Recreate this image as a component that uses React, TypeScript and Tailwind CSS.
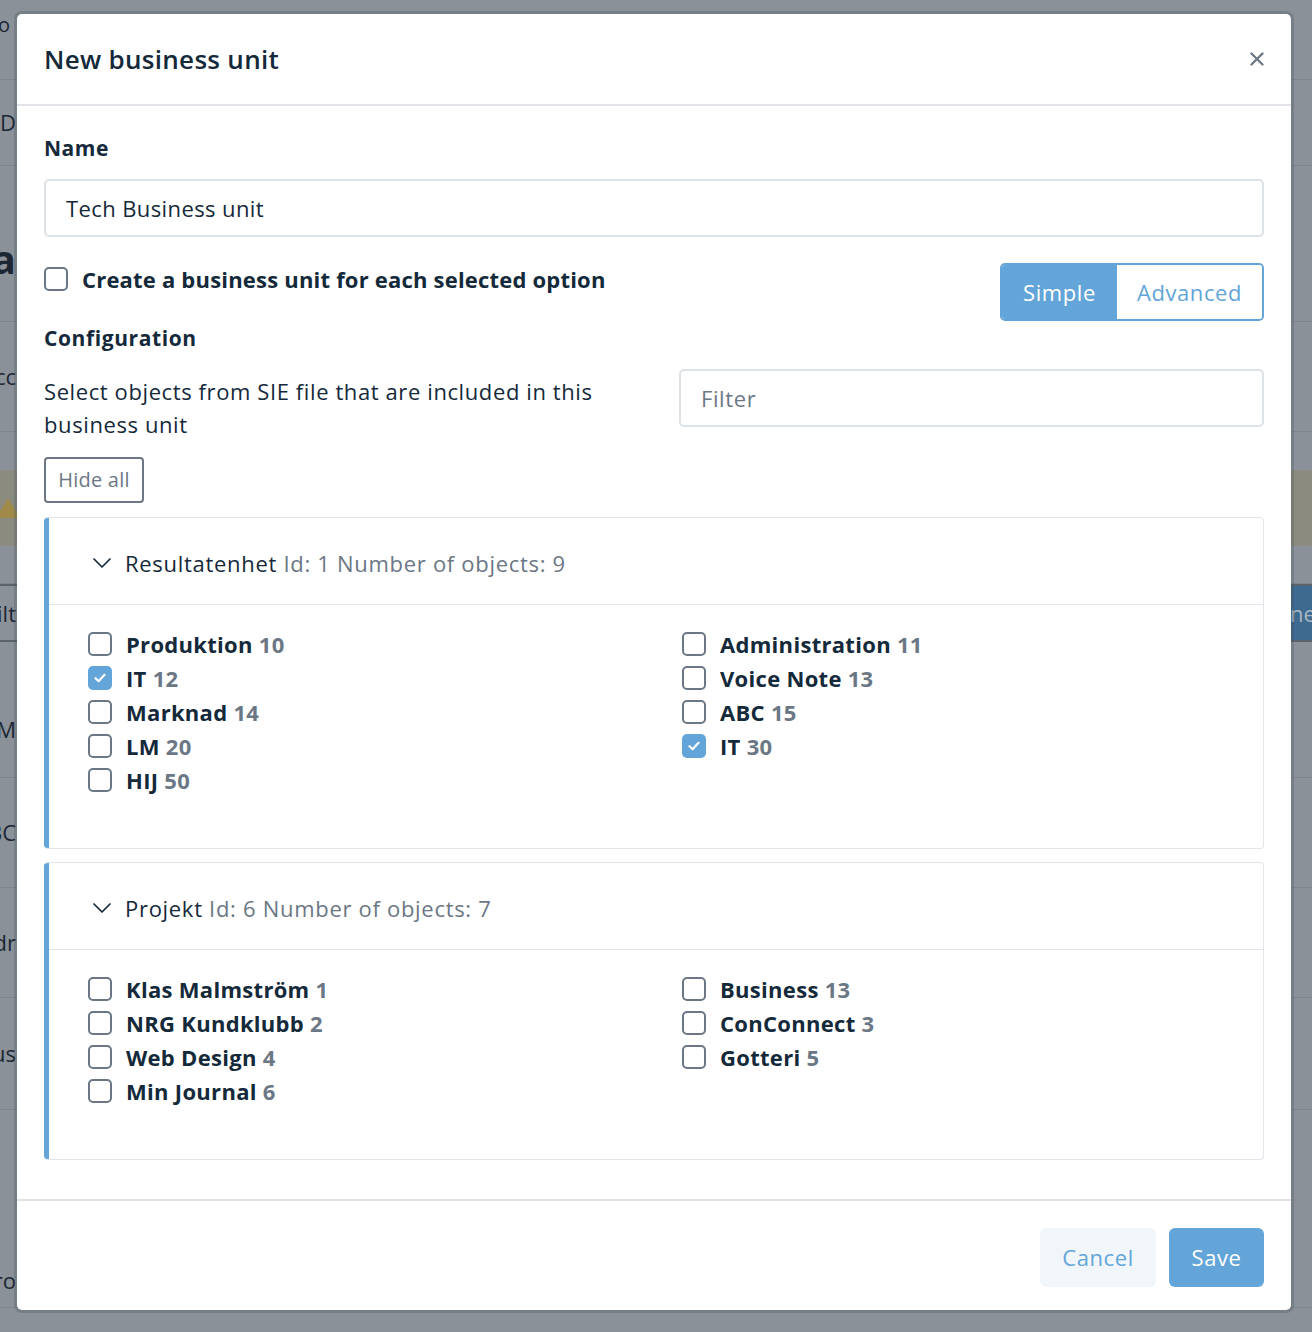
import React from 'react';

type Option = { label: string; id: number; checked?: boolean };

type Group = {
  name: string;
  id: number;
  count: number;
  columns: Option[][];
};

const groups: Group[] = [
  {
    name: 'Resultatenhet',
    id: 1,
    count: 9,
    columns: [
      [
        { label: 'Produktion', id: 10 },
        { label: 'IT', id: 12, checked: true },
        { label: 'Marknad', id: 14 },
        { label: 'LM', id: 20 },
        { label: 'HIJ', id: 50 },
      ],
      [
        { label: 'Administration', id: 11 },
        { label: 'Voice Note', id: 13 },
        { label: 'ABC', id: 15 },
        { label: 'IT', id: 30, checked: true },
      ],
    ],
  },
  {
    name: 'Projekt',
    id: 6,
    count: 7,
    columns: [
      [
        { label: 'Klas Malmström', id: 1 },
        { label: 'NRG Kundklubb', id: 2 },
        { label: 'Web Design', id: 4 },
        { label: 'Min Journal', id: 6 },
      ],
      [
        { label: 'Business', id: 13 },
        { label: 'ConConnect', id: 3 },
        { label: 'Gotteri', id: 5 },
      ],
    ],
  },
];

const Check = ({ checked = false }: { checked?: boolean }) =>
  checked ? (
    <span className="flex h-6 w-6 shrink-0 items-center justify-center rounded-[5px] bg-[#63a5d8]">
      <svg width="12" height="10" viewBox="0 0 12 10" fill="none">
        <path d="M1.5 5.2 4.6 8.2 10.5 1.8" stroke="white" strokeWidth="2.2" strokeLinecap="round" strokeLinejoin="round" />
      </svg>
    </span>
  ) : (
    <span className="h-6 w-6 shrink-0 rounded-[5px] border-[2.5px] border-[#6b7785] bg-white" />
  );

const GroupCard = ({ group }: { group: Group }) => (
  <div className="flex overflow-hidden rounded-[4px] border border-[#e1e4e8] border-l-0">
    <div className="w-[5px] shrink-0 bg-[#63a5d8]" />
    <div className="flex-1">
      <div className="flex h-[87px] items-center gap-[13px] border-b border-[#e1e4e8] pl-[43px] pt-[4px]">
        <svg width="20" height="12" viewBox="0 0 20 12" fill="none">
          <path d="M2 2 10 10 18 2" stroke="#14293a" strokeWidth="1.7" strokeLinecap="round" strokeLinejoin="round" />
        </svg>
        <span className="text-[22px] leading-[27px] tracking-[0.7px]">
          <span className="font-medium text-[#14293a]">{group.name}</span>
          <span className="text-[#6b7785]"> Id: {group.id} Number of objects: {group.count}</span>
        </span>
      </div>
      <div className="grid grid-cols-[594px_1fr] pb-[51px] pl-[39px] pt-[22px]">
        {group.columns.map((col, i) => (
          <div key={i} className="flex flex-col">
            {col.map((opt) => (
              <div key={opt.label + opt.id} className="flex h-[34px] items-center gap-[14px]">
                <Check checked={opt.checked} />
                <span className="text-[22px] font-bold leading-[27px] tracking-[0.3px]">
                  <span className="text-[#14293a]">{opt.label}</span>
                  <span className="text-[#6b7785]"> {opt.id}</span>
                </span>
              </div>
            ))}
          </div>
        ))}
      </div>
    </div>
  </div>
);

const BgRow = ({ h, left, className = '' }: { h: string; left?: string; className?: string }) => (
  <div className={'flex items-center border-b border-[#7e858d] ' + h + ' ' + className}>
    <div className="flex w-[16px] justify-end overflow-hidden whitespace-nowrap text-[22px] text-[#1c2733]">{left}</div>
  </div>
);

export default function App() {
  return (
    <div className="relative h-[1332px] w-full overflow-hidden bg-[#8a9199] font-['Open_Sans',sans-serif]">
      {/* dimmed page behind the dialog */}
      <div className="flex flex-col" aria-hidden="true">
        <div className="flex h-[80px] items-start border-b border-[#7e858d] pt-[10px]">
          <div className="flex w-[10px] justify-end overflow-hidden whitespace-nowrap text-[20px] text-[#1c2733]">Info</div>
        </div>
        <BgRow h="h-[86px]" left="D" />
        <div className="flex h-[156px] items-center border-b border-[#7e858d] pt-[30px]">
          <div className="flex w-[16px] justify-end overflow-hidden whitespace-nowrap text-[40px] font-bold text-[#1c2733]">Da</div>
        </div>
        <BgRow h="h-[110px]" left="Acc" />
        <div className="h-[38px]" />
        <div className="flex h-[76px] items-center bg-[#8c8b80]">
          <div className="ml-[-4px] h-0 w-0 border-x-[12px] border-b-[20px] border-x-transparent border-b-[#a08a4a]" />
        </div>
        <div className="h-[38px] border-b border-[#7e858d]" />
        <div className="flex h-[58px] items-center justify-between border-y-2 border-[#5b646d]">
          <div className="flex w-[16px] justify-end overflow-hidden text-[22px] text-[#1c2733]">Filt</div>
          <div className="flex h-full w-[22px] items-center overflow-hidden bg-[#3f6a8f] text-[22px] text-[#aab8c6]">ne</div>
        </div>
        <BgRow h="h-[136px]" left="SAM" className="pt-[40px]" />
        <BgRow h="h-[110px]" left="ABC" />
        <BgRow h="h-[110px]" left="Adr" />
        <BgRow h="h-[112px]" left="Bus" />
        <BgRow h="h-[198px]" left="Pro" className="items-end pb-[10px]" />
      </div>

      {/* dialog */}
      <div className="absolute left-[17px] top-[14px] flex w-[1274px] flex-col rounded-[5px] bg-white shadow-[0_0_0_3px_rgba(60,70,80,0.25)]">
        <div className="flex h-[92px] items-center justify-between border-b-2 border-[#e0e4e8] pl-[27px] pr-[27px]">
          <h1 className="text-[26px] font-semibold leading-[32px] tracking-[0.3px] text-[#14293a]">New business unit</h1>
          <svg width="14" height="14" viewBox="0 0 14 14" fill="none">
            <path d="M1.5 1.5 12.5 12.5M12.5 1.5 1.5 12.5" stroke="#6b7785" strokeWidth="2.3" strokeLinecap="round" />
          </svg>
        </div>

        <div className="flex flex-col px-[27px] pb-[39px] pt-[29px]">
          <label className="text-[21px] font-bold leading-[27px] tracking-[0.5px] text-[#14293a]">Name</label>
          <div className="mt-[17px] flex h-[58px] items-center rounded-[5px] border-2 border-[#dde2e6] px-[20px] text-[22px] tracking-[0.4px] text-[#14293a]">
            Tech Business unit
          </div>

          <div className="mt-[26px] flex items-start justify-between">
            <div className="flex flex-col">
              <div className="flex h-[32px] items-center gap-[14px]">
                <Check />
                <span className="text-[22px] font-bold leading-[27px] tracking-[0.2px] text-[#14293a]">Create a business unit for each selected option</span>
              </div>
              <div className="mt-[30px] text-[21px] font-bold leading-[27px] tracking-[0.6px] text-[#14293a]">Configuration</div>
            </div>
            <div className="flex h-[58px] overflow-hidden rounded-[5px] border-2 border-[#63a5d8] text-[22px] tracking-[0.6px]">
              <div className="flex w-[115px] items-center justify-center bg-[#63a5d8] text-white">Simple</div>
              <div className="flex w-[145px] items-center justify-center bg-white text-[#63a5d8]">Advanced</div>
            </div>
          </div>

          <div className="mt-[17px] flex items-start justify-between">
            <p className="w-[570px] pt-[6px] text-[22px] leading-[33px] tracking-[0.6px] text-[#14293a]">
              Select objects from SIE file that are included in this business unit
            </p>
            <div className="flex h-[58px] w-[585px] items-center rounded-[5px] border-2 border-[#dde2e6] px-[20px] text-[22px] tracking-[0.6px] text-[#6b7785]">
              Filter
            </div>
          </div>

          <div className="mt-[16px] flex">
            <button className="flex h-[46px] w-[100px] items-center justify-center rounded-[4px] border-2 border-[#6b7785] text-[20px] tracking-[0.2px] text-[#6b7785]">
              Hide all
            </button>
          </div>

          <div className="mt-[14px] flex flex-col gap-[13px]">
            {groups.map((g) => (
              <GroupCard key={g.name} group={g} />
            ))}
          </div>
        </div>

        <div className="flex justify-end gap-[13px] border-t-2 border-[#e0e4e8] px-[27px] pb-[23px] pt-[27px]">
          <button className="flex h-[59px] w-[116px] items-center justify-center rounded-[6px] bg-[#f1f6fb] text-[22px] tracking-[0.6px] text-[#63a5d8]">
            Cancel
          </button>
          <button className="flex h-[59px] w-[95px] items-center justify-center rounded-[6px] bg-[#63a5d8] text-[22px] tracking-[0.6px] text-white">
            Save
          </button>
        </div>
      </div>
    </div>
  );
}
